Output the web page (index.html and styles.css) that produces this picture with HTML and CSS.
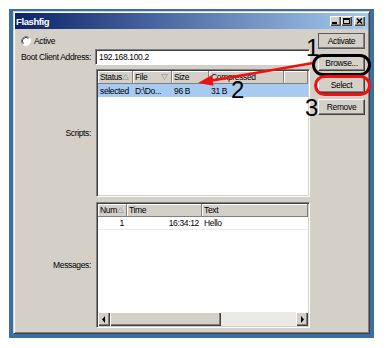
FILE: index.html
```html
<!DOCTYPE html>
<html>
<head>
<meta charset="utf-8">
<title>Flashfig</title>
<link rel="stylesheet" href="styles.css">
</head>
<body>
<div class="window">
  <div class="frame">
    <div class="titlebar">
      <span class="title">Flashfig</span>
      <div class="tb-buttons">
        <span class="tb-btn"><svg width="11" height="10" viewBox="0 0 11 10"><rect x="2" y="6" width="5" height="2" fill="#000"/></svg></span>
        <span class="tb-btn"><svg width="11" height="10" viewBox="0 0 11 10"><rect x="2.5" y="2.5" width="6" height="5" fill="none" stroke="#000"/><rect x="2" y="2" width="7" height="2" fill="#000"/></svg></span>
        <span class="tb-btn tb-close"><svg width="11" height="10" viewBox="0 0 11 10"><path d="M3 2.5 L8 7.5 M8 2.5 L3 7.5" stroke="#000" stroke-width="1.6"/></svg></span>
      </div>
    </div>
    <div class="content">
      <div class="form">
        <div class="row row-active">
          <svg class="radio" width="10" height="10" viewBox="0 0 10 10">
            <circle cx="5" cy="5" r="4.5" fill="#fff"/>
            <path d="M1.82 8.18 A4.5 4.5 0 0 1 8.18 1.82" fill="none" stroke="#808080"/>
            <path d="M8.18 1.82 A4.5 4.5 0 0 1 1.82 8.18" fill="none" stroke="#fff"/>
            <path d="M2.5 7.5 A3.5 3.5 0 0 1 7.5 2.5" fill="none" stroke="#404040"/>
          </svg>
          <span>Active</span>
        </div>
        <div class="row row-addr">
          <span class="label">Boot Client Address:</span>
          <div class="input">192.168.100.2</div>
        </div>
        <div class="row row-scripts">
          <span class="label">Scripts:</span>
          <div class="list">
            <div class="grid scripts-cols header">
              <div class="hcell">Status<svg class="sort" width="7" height="6" viewBox="0 0 7 6"><path d="M3.5 0.5 L6.5 5.5 L0.5 5.5 Z" fill="none" stroke="#a8a8a8"/></svg></div>
              <div class="hcell">File<svg class="sort" width="7" height="6" viewBox="0 0 7 6"><path d="M0.5 0.5 L6.5 0.5 L3.5 5.5 Z" fill="none" stroke="#a8a8a8"/></svg></div>
              <div class="hcell">Size</div>
              <div class="hcell">Compressed</div>
              <div class="hcell"></div>
            </div>
            <div class="grid scripts-cols datarow selected">
              <div class="cell">selected</div>
              <div class="cell">D:\Do...</div>
              <div class="cell">96 B</div>
              <div class="cell">31 B</div>
              <div class="cell"></div>
            </div>
            <div class="fill"></div>
          </div>
        </div>
        <div class="row row-messages">
          <span class="label">Messages:</span>
          <div class="list">
            <div class="grid msg-cols header">
              <div class="hcell">Num<svg class="sort" width="7" height="6" viewBox="0 0 7 6"><path d="M3.5 0.5 L6.5 5.5 L0.5 5.5 Z" fill="none" stroke="#a8a8a8"/></svg></div>
              <div class="hcell">Time</div>
              <div class="hcell">Text</div>
            </div>
            <div class="grid msg-cols datarow plain">
              <div class="cell num">1</div>
              <div class="cell num">16:34:12</div>
              <div class="cell">Hello</div>
            </div>
            <div class="fill"></div>
            <div class="hscroll">
              <span class="sbtn"><svg width="4" height="7" viewBox="0 0 4 7"><path d="M3 0 L3 7 L0 3.5 Z" fill="#000"/></svg></span>
              <span class="thumb"></span>
              <span class="track"></span>
              <span class="sbtn"><svg width="4" height="7" viewBox="0 0 4 7"><path d="M1 0 L1 7 L4 3.5 Z" fill="#000"/></svg></span>
            </div>
          </div>
        </div>
      </div>
      <div class="buttons">
        <button class="btn btn-default">Activate</button>
        <button class="btn">Browse...</button>
        <button class="btn">Select</button>
        <button class="btn">Remove</button>
      </div>
    </div>
  </div>
  <svg class="marks" width="365" height="329" viewBox="0 0 365 329">
    <line x1="304" y1="54" x2="203" y2="71.5" stroke="#f01010" stroke-width="2.5"/>
    <polygon points="189,74 204.6,76.8 202.6,66.2" fill="#f01010"/>
    <rect x="304.5" y="46.5" width="56" height="19" rx="9.5" fill="none" stroke="#000" stroke-width="3"/>
    <rect x="306.5" y="67.5" width="54" height="18" rx="9" fill="none" stroke="#f01010" stroke-width="3"/>
  </svg>
  <span class="num-mark mark-1">1</span>
  <span class="num-mark mark-2">2</span>
  <span class="num-mark mark-3">3</span>
</div>
</body>
</html>
```

FILE: styles.css
```css
* { box-sizing: border-box; }

body {
  margin: 0;
  background: #ffffff;
}

.window {
  position: relative;
  width: 365px;
  height: 329px;
  margin: 9px 0 0 9px;
  padding: 2px 4px 4px 4px;
  background: #3a6ea5;
  font-family: "Liberation Sans", Arial, sans-serif;
  font-size: 8.5px;
  letter-spacing: -0.35px;
  color: #000;
}

.frame {
  height: 100%;
  display: flex;
  flex-direction: column;
  background: #d4d0c8;
  border: 1px solid;
  border-color: #d4d0c8 #404040 #404040 #d4d0c8;
  box-shadow: inset 1px 1px 0 #ffffff, inset -1px -1px 0 #808080;
  padding: 1px;
}

.titlebar {
  height: 16px;
  flex: none;
  display: flex;
  align-items: center;
  padding: 0 3px 0 1px;
  background: linear-gradient(to right, #0a246a, #a6caf0);
}

.title {
  color: #fff;
  font-weight: bold;
  font-size: 9.5px;
  letter-spacing: -0.4px;
}

.tb-buttons {
  margin-left: auto;
  display: flex;
}

.tb-btn {
  width: 11px;
  height: 10px;
  display: flex;
  background: #d4d0c8;
  box-shadow: inset 1px 1px 0 #fff, inset -1px -1px 0 #404040, inset -2px -2px 0 #808080;
}

.tb-close {
  margin-left: 2px;
}

.content {
  flex: 1;
  display: flex;
}

.form {
  width: 295px;
  display: flex;
  flex-direction: column;
  padding-top: 6px;
}

.row {
  display: flex;
  align-items: center;
  gap: 4px;
}

.label {
  width: 76px;
  flex: none;
  text-align: right;
  white-space: nowrap;
}

.row-active {
  height: 12px;
  padding-left: 6px;
  gap: 3px;
}

.row-addr {
  margin-top: 2px;
  height: 16px;
}

.row-scripts {
  margin-top: 4px;
  height: 128px;
}

.row-messages {
  margin-top: 5px;
  height: 126px;
}

.input {
  flex: 1;
  height: 16px;
  background: #fff;
  border: 1px solid;
  border-color: #808080 #fff #fff #808080;
  box-shadow: inset 1px 1px 0 #404040;
  padding: 0 0 0 3px;
  line-height: 14px;
}

.list {
  flex: 1;
  height: 100%;
  display: flex;
  flex-direction: column;
  margin-left: 1px;
  background: #fff;
  border: 1px solid;
  border-color: #808080 #fff #fff #808080;
  box-shadow: inset 1px 1px 0 #404040, inset -1px -1px 0 #d4d0c8;
  padding: 1px;
}

.grid {
  display: grid;
}

.scripts-cols {
  grid-template-columns: 35px 39px 37px 75px 1fr;
}

.msg-cols {
  grid-template-columns: 29px 75px 1fr;
}

.header {
  height: 13px;
  background: #d4d0c8;
}

.hcell {
  display: flex;
  align-items: center;
  padding: 0 3px 0 2px;
  border-right: 1px solid #808080;
  border-bottom: 1px solid #808080;
  box-shadow: inset 1px 1px 0 #fff;
  white-space: nowrap;
  overflow: hidden;
}

.sort {
  margin-left: auto;
  flex: none;
}

.datarow {
  height: 12px;
}

.selected {
  background: #a6caf0;
  height: 13px;
}

.plain {
  border-bottom: 1px solid #ebebeb;
  height: 13px;
}

.cell {
  display: flex;
  align-items: center;
  padding-left: 2px;
  white-space: nowrap;
  overflow: hidden;
}

.cell.num {
  justify-content: flex-end;
  padding-right: 3px;
}

.fill {
  flex: 1;
}

.hscroll {
  height: 14px;
  display: flex;
}

.sbtn {
  width: 12px;
  display: flex;
  align-items: center;
  justify-content: center;
  background: #d4d0c8;
  box-shadow: inset 1px 1px 0 #fff, inset -1px -1px 0 #404040, inset -2px -2px 0 #808080;
}

.thumb {
  width: 111px;
  background: #d4d0c8;
  box-shadow: inset 1px 1px 0 #fff, inset -1px -1px 0 #404040, inset -2px -2px 0 #808080;
}

.track {
  flex: 1;
  background: #eceae5;
}

.buttons {
  width: 47px;
  margin-left: 8px;
  padding-top: 4px;
  display: flex;
  flex-direction: column;
  gap: 6px;
}

.btn {
  height: 16px;
  width: 47px;
  padding: 0;
  margin: 0;
  font: inherit;
  letter-spacing: inherit;
  color: #000;
  background: #d4d0c8;
  border: 1px solid;
  border-color: #fff #404040 #404040 #fff;
  box-shadow: inset -1px -1px 0 #808080;
}

.btn-default {
  outline: 1px solid #5a5a5a;
  outline-offset: -1px;
}

.marks {
  position: absolute;
  left: 0;
  top: 0;
}

.num-mark {
  position: absolute;
  font-family: "Liberation Sans", Arial, sans-serif;
  font-size: 24px;
  line-height: 24px;
  letter-spacing: 0;
  color: #000;
}

.mark-1 { left: 297px; top: 27px; }
.mark-2 { left: 222px; top: 69px; }
.mark-3 { left: 296px; top: 87px; }
```
